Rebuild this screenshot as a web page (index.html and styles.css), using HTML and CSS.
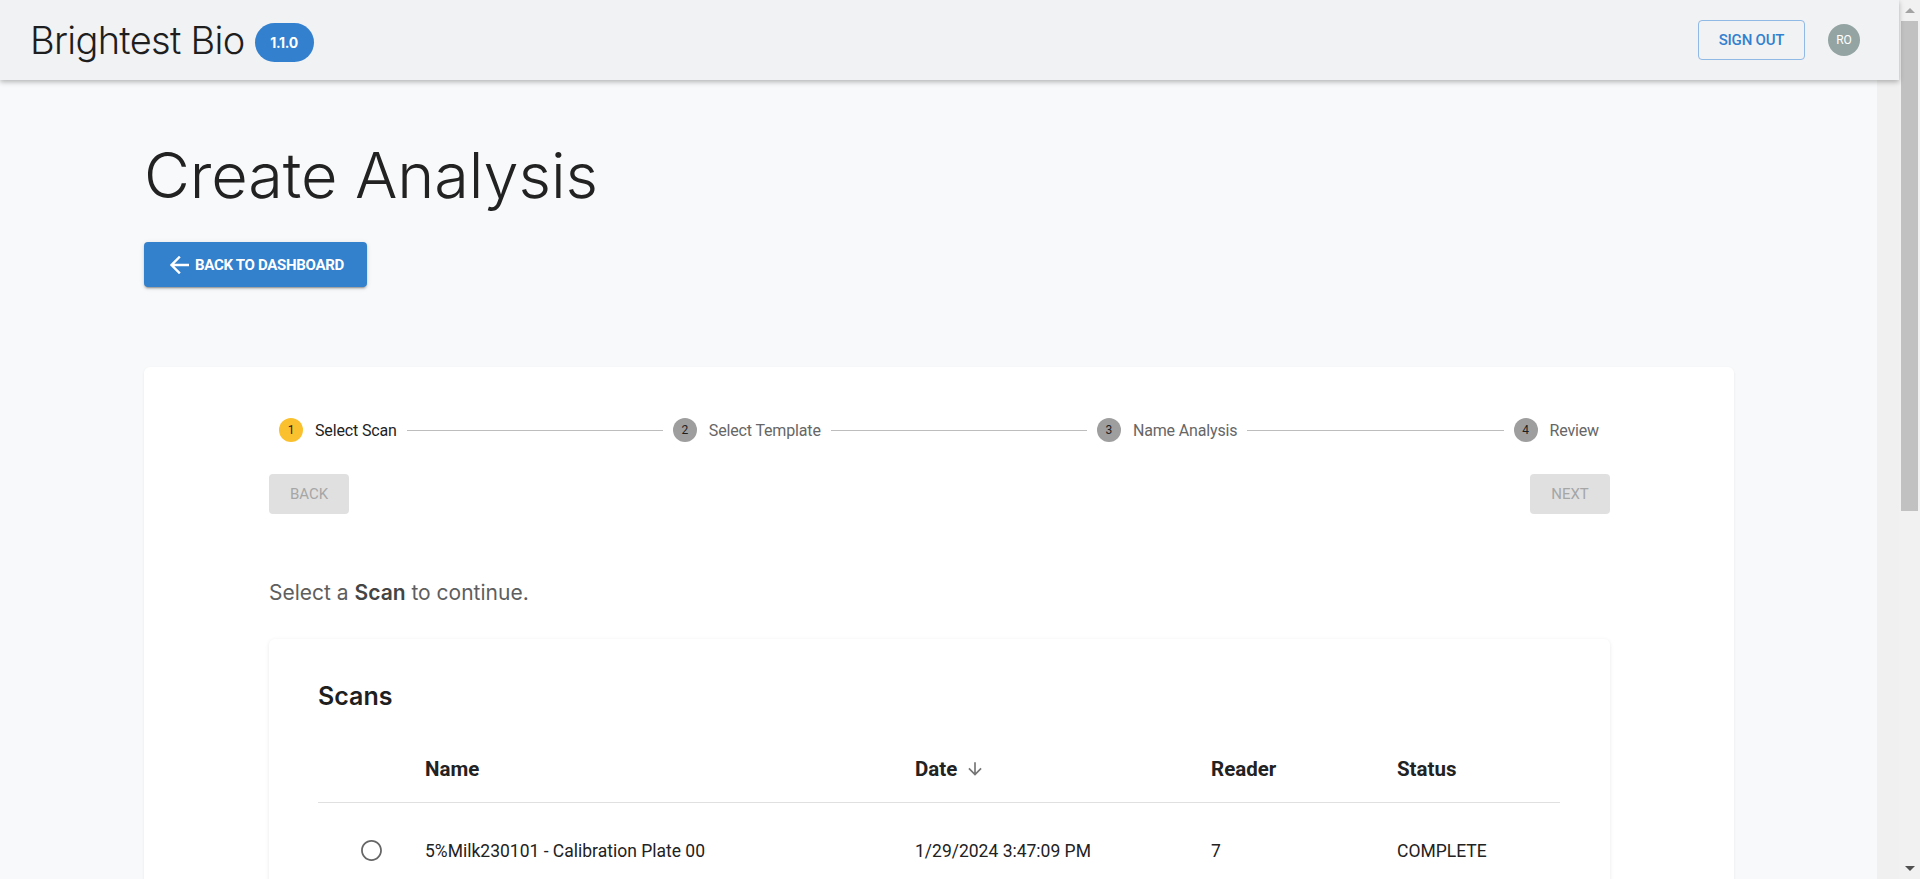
FILE: index.html
```html
<!DOCTYPE html>
<html lang="en">
<head>
<meta charset="utf-8">
<title>Create Analysis - Brightest Bio</title>
<link rel="stylesheet" href="styles.css">
</head>
<body>
<div class="app">
  <div class="viewport">
    <header class="topbar">
      <div class="brand">Brightest Bio</div>
      <span class="badge">1.1.0</span>
      <div class="topbar-spacer"></div>
      <button class="signout">SIGN OUT</button>
      <div class="avatar">RO</div>
    </header>
    <div class="below">
      <main class="main">
        <h1 class="title">Create Analysis</h1>
        <button class="back-btn">
          <svg class="back-icon" viewBox="0 0 20 18" width="20" height="18"><path d="M19 9H3M10 1.5L2.5 9l7.5 7.5" fill="none" stroke="#fff" stroke-width="2.4" stroke-linecap="square"/></svg>
          <span>BACK TO DASHBOARD</span>
        </button>
        <section class="card">
          <div class="stepper">
            <div class="step active"><span class="step-num">1</span><span class="step-label">Select Scan</span></div>
            <div class="connector"></div>
            <div class="step"><span class="step-num">2</span><span class="step-label">Select Template</span></div>
            <div class="connector"></div>
            <div class="step"><span class="step-num">3</span><span class="step-label">Name Analysis</span></div>
            <div class="connector"></div>
            <div class="step"><span class="step-num">4</span><span class="step-label">Review</span></div>
          </div>
          <div class="nav-row">
            <button class="nav-btn" disabled>BACK</button>
            <button class="nav-btn" disabled>NEXT</button>
          </div>
          <p class="prompt">Select a <b>Scan</b> to continue.</p>
          <div class="inner-card">
            <h2 class="scans-title">Scans</h2>
            <div class="table">
              <div class="t-row t-head">
                <div></div>
                <div>Name</div>
                <div class="sortable">Date <svg class="sort-icon" viewBox="0 0 24 24" width="20" height="20"><path d="M20 12l-1.41-1.41L13 16.17V4h-2v12.170l-5.58-5.59L4 12l8 8 8-8z" fill="#757575"/></svg></div>
                <div>Reader</div>
                <div>Status</div>
              </div>
              <div class="t-row t-body">
                <div class="radio-cell"><svg viewBox="0 0 24 24" width="25" height="25"><path d="M12 2C6.48 2 2 6.48 2 12s4.48 10 10 10 10-4.48 10-10S17.52 2 12 2zm0 18.3c-4.58 0-8.3-3.72-8.3-8.3S7.42 3.7 12 3.7s8.3 3.72 8.3 8.3-3.72 8.3-8.3 8.3z" fill="#666"/></svg></div>
                <div>5%Milk230101 - Calibration Plate 00</div>
                <div>1/29/2024 3:47:09 PM</div>
                <div>7</div>
                <div>COMPLETE</div>
              </div>
            </div>
          </div>
        </section>
      </main>
      <div class="gutter"></div>
    </div>
  </div>
  <div class="scrollbar">
    <div class="sb-btn"><span class="tri-up"></span></div>
    <div class="thumb"></div>
    <div class="sb-track"></div>
    <div class="sb-btn"><span class="tri-down"></span></div>
  </div>
</div>
</body>
</html>
```
FILE: styles.css
```css
* { box-sizing: border-box; }
html, body { margin: 0; height: 100%; overflow: hidden; }
body {
  font-family: Inter, "Noto Sans", sans-serif;
  background: #f8f9fa;
  color: #1f1f1f;
}
button { font-family: Roboto, "Liberation Sans", sans-serif; cursor: pointer; }

.app { display: flex; height: 100vh; }
.viewport { flex: 1; display: flex; flex-direction: column; min-width: 0; }

/* top bar */
.topbar {
  flex: none;
  height: 80px;
  background: #f1f2f4;
  display: flex;
  align-items: center;
  padding: 0 39px 0 30px;
  box-shadow: 0 2px 5px rgba(0,0,0,0.28);
  position: relative;
  z-index: 2;
}
.brand {
  font-weight: 300;
  font-size: 38px;
  letter-spacing: -0.7px;
  color: #1e1e1e;
  line-height: 1;
}
.badge {
  margin-left: 10px;
  margin-top: 5px;
  width: 59px;
  height: 39px;
  border-radius: 20px;
  background: #3380cf;
  color: #fff;
  font-weight: 700;
  font-size: 14px;
  letter-spacing: -0.3px;
  display: flex;
  align-items: center;
  justify-content: center;
}
.topbar-spacer { flex: 1; }
.signout {
  width: 107px;
  height: 40px;
  border: 1px solid #90b9e6;
  border-radius: 4px;
  background: transparent;
  color: #3380cf;
  font-size: 15px;
  font-weight: 500;
  letter-spacing: -0.2px;
  padding: 0;
}
.avatar {
  margin-left: 23px;
  width: 32px;
  height: 32px;
  border-radius: 50%;
  background: #94a4a2;
  color: #fff;
  font-family: Roboto, sans-serif;
  font-size: 12px;
  display: flex;
  align-items: center;
  justify-content: center;
}

/* body area */
.below { flex: 1; display: flex; min-height: 0; overflow: hidden; }
.main { flex: 1; min-width: 0; padding: 57px 143px 0 144px; }
.gutter { width: 22px; flex: none; background: #f0f0f0; }

.title {
  margin: 0;
  font-weight: 300;
  font-size: 63px;
  line-height: 76px;
  letter-spacing: -0.1px;
  color: #222;
}
.back-btn {
  margin-top: 29px;
  width: 223px;
  height: 45px;
  display: flex;
  align-items: center;
  gap: 6px;
  padding: 0 0 0 25px;
  border: none;
  border-radius: 4px;
  background: #3380cd;
  color: #fff;
  font-size: 15px;
  font-weight: 700;
  letter-spacing: -0.3px;
  box-shadow: 0 3px 1px -2px rgba(0,0,0,0.2), 0 2px 2px 0 rgba(0,0,0,0.14), 0 1px 5px 0 rgba(0,0,0,0.12);
}
.back-icon { flex: none; }

.card {
  margin-top: 80px;
  background: #fff;
  border-radius: 6px;
  box-shadow: 0 1px 3px rgba(0,0,0,0.07);
  padding: 51px 124px 40px 125px;
}

.stepper {
  display: flex;
  align-items: center;
  height: 24px;
  padding: 0 11px 0 10px;
}
.step { display: flex; align-items: center; gap: 12px; }
.step-num {
  width: 24px;
  height: 24px;
  border-radius: 50%;
  background: #9e9e9e;
  color: #1e1e1e;
  font-family: Roboto, sans-serif;
  font-size: 12px;
  display: flex;
  align-items: center;
  justify-content: center;
}
.step.active .step-num { background: #fbc02d; }
.step-label {
  font-family: Roboto, sans-serif;
  font-size: 16px;
  letter-spacing: -0.15px;
  color: #666;
}
.step.active .step-label { color: #1e1e1e; }
.connector { flex: 1; height: 1px; background: #bdbdbd; margin: 0 10px; }

.nav-row { margin-top: 32px; display: flex; justify-content: space-between; }
.nav-btn {
  width: 80px;
  height: 40px;
  border: none;
  border-radius: 4px;
  background: #e0e0e0;
  color: #a6a6a6;
  font-size: 15px;
  padding: 0;
}

.prompt {
  margin: 64px 0 0;
  font-size: 21px;
  line-height: 30px;
  color: #5e5e5e;
}
.prompt b { font-weight: 600; color: #444; }

.inner-card {
  margin-top: 31px;
  background: #fff;
  border-radius: 6px;
  box-shadow: 0 1px 4px rgba(0,0,0,0.09);
  padding: 41px 50px 0 49px;
}
.scans-title {
  margin: 0;
  font-size: 25px;
  line-height: 32px;
  font-weight: 600;
  color: #1f1f1f;
}
.table { margin-top: 24px; font-family: Roboto, sans-serif; }
.t-row {
  display: grid;
  grid-template-columns: 107px 490px 296px 186px 163px;
  align-items: center;
}
.t-head {
  height: 67px;
  border-bottom: 1px solid #e0e0e0;
  font-size: 20.5px;
  font-weight: 700;
  color: #222;
}
.sortable { display: flex; align-items: center; gap: 8px; }
.t-body {
  height: 95px;
  font-size: 17.5px;
  color: #222;
}
.radio-cell { display: flex; justify-content: center; }
.radio-cell svg { display: block; }

/* scrollbar */
.scrollbar {
  width: 21px;
  flex: none;
  background: #f1f1f1;
  display: flex;
  flex-direction: column;
  align-items: center;
}
.sb-btn { width: 21px; height: 21px; display: flex; align-items: center; justify-content: center; }
.tri-up { width: 0; height: 0; border-left: 5px solid transparent; border-right: 5px solid transparent; border-bottom: 5px solid #a3a3a3; }
.tri-down { width: 0; height: 0; border-left: 5px solid transparent; border-right: 5px solid transparent; border-top: 5px solid #505050; }
.thumb { width: 17px; height: 490px; background: #c1c1c1; }
.sb-track { flex: 1; }
```
